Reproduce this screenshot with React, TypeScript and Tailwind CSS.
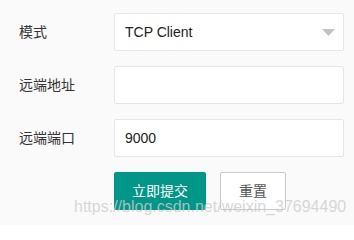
import React from "react";

const cjk = { fontFamily: '"Liberation Sans", Arial, "Noto Sans CJK SC", sans-serif' };

function Row({ label, children }: { label: string; children: React.ReactNode }) {
  return (
    <div className="flex items-center h-[38px] mb-[15px]">
      <div className="w-[95px] text-[14px] leading-[20px] text-[#333]">{label}</div>
      {children}
    </div>
  );
}

export default function App() {
  return (
    <div className="relative w-[354px] h-[225px] bg-[#fafafa] overflow-hidden" style={cjk}>
      <div className="pt-[13px] pl-[19px]">
        <Row label="模式">
          <div className="relative w-[230px] h-[38px] bg-white border border-[#e6e6e6] rounded-[2px] flex items-center pl-[10px] text-[14px] text-[#222]">
            TCP Client
            <svg className="absolute left-[207px] top-[15px]" width="13" height="7" viewBox="0 0 13 7">
              <polygon points="0,0 13,0 6.5,7" fill="#c2c2c2" />
            </svg>
          </div>
        </Row>
        <Row label="远端地址">
          <div className="w-[230px] h-[38px] bg-white border border-[#e6e6e6] rounded-[2px]" />
        </Row>
        <Row label="远端端口">
          <div className="w-[230px] h-[38px] bg-white border border-[#e6e6e6] rounded-[2px] flex items-center pl-[10px] text-[14px] text-[#222]">
            9000
          </div>
        </Row>
        <div className="flex items-center pl-[95px] gap-[14px]">
          <div className="h-[38px] w-[92px] bg-[#009688] text-white text-[14px] rounded-[2px] flex items-center justify-center">
            立即提交
          </div>
          <div className="h-[38px] w-[66px] bg-white border border-[#c9c9c9] text-[#555] text-[14px] rounded-[2px] flex items-center justify-center">
            重置
          </div>
        </div>
      </div>
      <div className="absolute left-[74px] top-[195px] text-[16px] whitespace-nowrap text-[rgba(205,205,205,0.8)]">
        https://blog.csdn.net/weixin_37694490
      </div>
    </div>
  );
}
